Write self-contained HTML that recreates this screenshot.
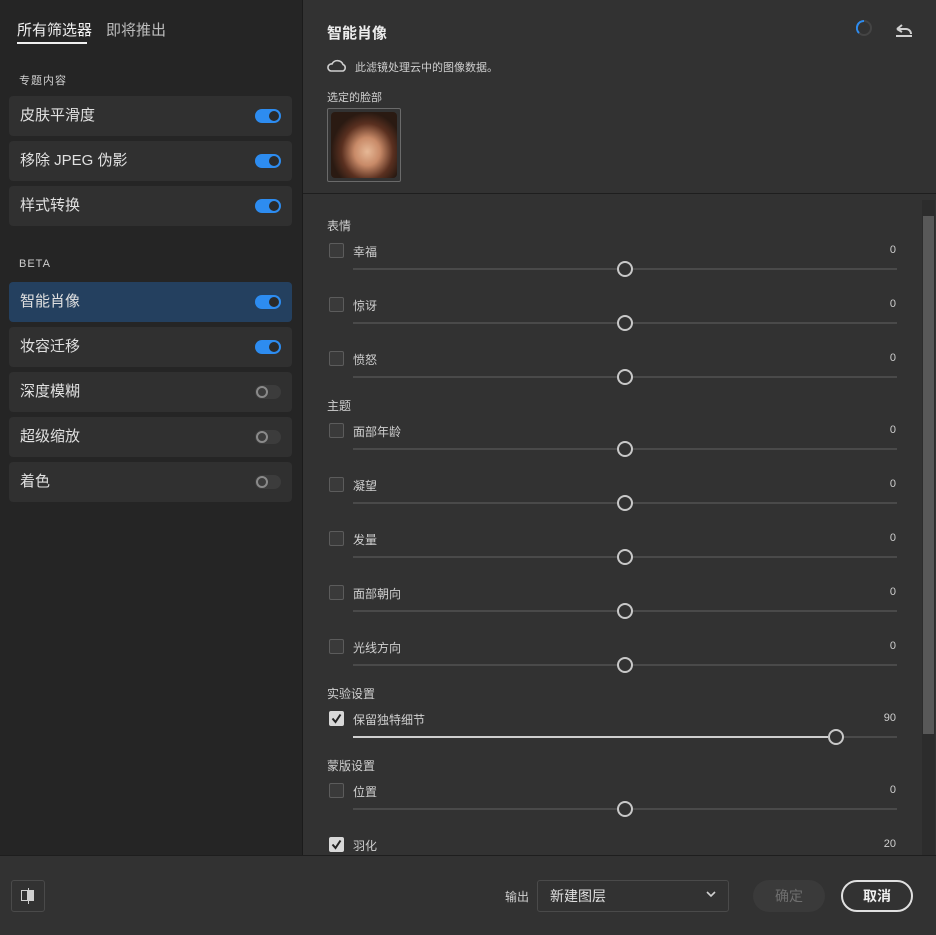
<!DOCTYPE html>
<html><head><meta charset="utf-8"><style>
*{margin:0;padding:0;box-sizing:border-box}
body{width:936px;height:935px;background:#323232;font-family:"Liberation Sans","Noto Sans CJK SC",sans-serif;position:relative;overflow:hidden;color:#d8d8d8}
.a{position:absolute}
#left{left:0;top:0;width:302px;height:855px;background:#252525}
#vdiv{left:302px;top:0;width:1px;height:855px;background:#1b1b1b}
.item{position:absolute;left:9px;width:283px;height:40px;background:#303030;border-radius:4px;font-size:15px;color:#e0e0e0;line-height:40px;padding-left:11px}
.item.sel{background:#24405f}
.tg{position:absolute;right:11px;top:13px;width:26px;height:14px;border-radius:7px;background:#2d8cf0}
.tg::after{content:"";position:absolute;right:2px;top:2px;width:10px;height:10px;border-radius:50%;background:#2a2a2a}
.tg.off{background:#3c3c3c}
.tg.off::after{left:1px;right:auto;top:1px;width:12px;height:12px;background:transparent;border:2px solid #8a8a8a;box-sizing:border-box}
.sec{position:absolute;left:19px;font-size:11px;color:#cfcfcf;letter-spacing:1px}
.lbl{position:absolute;left:353px;font-size:12px;color:#cfcfcf}
.val{position:absolute;right:40px;font-size:11px;color:#cfcfcf}
.cb{position:absolute;left:329px;width:15px;height:15px;border:1px solid #5c5c5c;background:#3a3a3a;border-radius:2px}
.cb.on{background:#d8d8d8;border-color:#d8d8d8}
.tr{position:absolute;left:353px;width:544px;height:2px;background:#4a4a4a}
.th{position:absolute;width:16px;height:16px;border-radius:50%;border:2px solid #c8c8c8;background:#323232}
.h{position:absolute;left:327px;font-size:12px;color:#cfcfcf}
</style></head><body>
<div id="left" class="a"></div>
<div id="vdiv" class="a"></div>
<div class="a" style="left:17px;top:19px;font-size:15px;color:#f0f0f0">所有筛选器</div>
<div class="a" style="left:17px;top:42px;width:70px;height:2px;background:#f0f0f0"></div>
<div class="a" style="left:106px;top:19px;font-size:15px;color:#bdbdbd">即将推出</div>
<div class="sec" style="top:72px">专题内容</div>
<div class="item" style="top:96px">皮肤平滑度<div class="tg"></div></div>
<div class="item" style="top:141px">移除 JPEG 伪影<div class="tg"></div></div>
<div class="item" style="top:186px">样式转换<div class="tg"></div></div>
<div class="sec" style="top:258px">BETA</div>
<div class="item sel" style="top:282px">智能肖像<div class="tg"></div></div>
<div class="item" style="top:327px">妆容迁移<div class="tg"></div></div>
<div class="item" style="top:372px">深度模糊<div class="tg off"></div></div>
<div class="item" style="top:417px">超级缩放<div class="tg off"></div></div>
<div class="item" style="top:462px">着色<div class="tg off"></div></div>

<div class="a" style="left:327px;top:22px;font-size:15px;font-weight:bold;color:#ececec">智能肖像</div>
<svg class="a" style="left:855px;top:19px" width="18" height="18"><circle cx="9" cy="9" r="7" fill="none" stroke="#444" stroke-width="2"/><path d="M9 2 A7 7 0 0 0 4 14" fill="none" stroke="#2d8cf0" stroke-width="2"/></svg>
<svg class="a" style="left:894px;top:22px" width="20" height="16"><path d="M3 7 L8 3 M3 7 L8 10 M3 7 H12 A5 5 0 0 1 17 12" fill="none" stroke="#d0d0d0" stroke-width="2"/><rect x="2" y="13" width="16" height="2" fill="#d0d0d0"/></svg>
<svg class="a" style="left:327px;top:57px" width="20" height="16"><path d="M4 14 H16 A3.5 3.5 0 0 0 16 7.5 A6 6 0 0 0 5 7 A3.5 3.5 0 0 0 4 14Z" fill="none" stroke="#cfcfcf" stroke-width="1.6"/></svg>
<div class="a" style="left:355px;top:59px;font-size:11px;color:#cfcfcf">此滤镜处理云中的图像数据。</div>
<div class="h" style="top:89px;font-size:11px">选定的脸部</div>
<div class="a" style="left:327px;top:108px;width:74px;height:74px;border:1px solid #6a6a6a;border-radius:2px"></div>
<div class="a" style="left:331px;top:112px;width:66px;height:66px;border-radius:4px;background:radial-gradient(ellipse at 55% 60%,#e6b896 0%,#c88a68 25%,#5a3020 50%,#2a1a12 70%),linear-gradient(90deg,#221510,#8a4a1a)"></div>
<div class="a" style="left:303px;top:193px;width:633px;height:1px;background:#1e1e1e"></div>
<div class="a" style="left:922px;top:200px;width:13px;height:655px;background:#2c2c2c"></div>
<div class="a" style="left:923px;top:216px;width:11px;height:518px;background:#585858"></div>

<div class="h" style="top:217px">表情</div>
<div class="cb" style="top:243px"></div><div class="lbl" style="top:243px">幸福</div><div class="val" style="top:244px">0</div><div class="tr" style="top:268px"></div><div class="th" style="left:617px;top:261px"></div>
<div class="cb" style="top:297px"></div><div class="lbl" style="top:297px">惊讶</div><div class="val" style="top:298px">0</div><div class="tr" style="top:322px"></div><div class="th" style="left:617px;top:315px"></div>
<div class="cb" style="top:351px"></div><div class="lbl" style="top:351px">愤怒</div><div class="val" style="top:352px">0</div><div class="tr" style="top:376px"></div><div class="th" style="left:617px;top:369px"></div>
<div class="h" style="top:397px">主题</div>
<div class="cb" style="top:423px"></div><div class="lbl" style="top:423px">面部年龄</div><div class="val" style="top:424px">0</div><div class="tr" style="top:448px"></div><div class="th" style="left:617px;top:441px"></div>
<div class="cb" style="top:477px"></div><div class="lbl" style="top:477px">凝望</div><div class="val" style="top:478px">0</div><div class="tr" style="top:502px"></div><div class="th" style="left:617px;top:495px"></div>
<div class="cb" style="top:531px"></div><div class="lbl" style="top:531px">发量</div><div class="val" style="top:532px">0</div><div class="tr" style="top:556px"></div><div class="th" style="left:617px;top:549px"></div>
<div class="cb" style="top:585px"></div><div class="lbl" style="top:585px">面部朝向</div><div class="val" style="top:586px">0</div><div class="tr" style="top:610px"></div><div class="th" style="left:617px;top:603px"></div>
<div class="cb" style="top:639px"></div><div class="lbl" style="top:639px">光线方向</div><div class="val" style="top:640px">0</div><div class="tr" style="top:664px"></div><div class="th" style="left:617px;top:657px"></div>
<div class="h" style="top:685px">实验设置</div>
<div class="cb on" style="top:711px"><svg width="13" height="13" style="position:absolute;left:0;top:0"><path d="M2.5 6.5 L5.5 10 L10.5 2.5" fill="none" stroke="#222" stroke-width="2"/></svg></div><div class="lbl" style="top:711px">保留独特细节</div><div class="val" style="top:712px">90</div><div class="tr" style="top:736px"></div><div class="tr" style="top:736px;width:475px;background:#cfcfcf"></div><div class="th" style="left:828px;top:729px"></div>
<div class="h" style="top:757px">蒙版设置</div>
<div class="cb" style="top:783px"></div><div class="lbl" style="top:783px">位置</div><div class="val" style="top:784px">0</div><div class="tr" style="top:808px"></div><div class="th" style="left:617px;top:801px"></div>
<div class="cb on" style="top:837px"><svg width="13" height="13" style="position:absolute;left:0;top:0"><path d="M2.5 6.5 L5.5 10 L10.5 2.5" fill="none" stroke="#222" stroke-width="2"/></svg></div><div class="lbl" style="top:837px">羽化</div><div class="val" style="top:838px">20</div>

<div class="a" style="left:0;top:855px;width:936px;height:80px;background:#323232;border-top:1px solid #1e1e1e"></div>
<div class="a" style="left:11px;top:880px;width:34px;height:32px;border:1px solid #4a4a4a;border-radius:3px"></div>
<svg class="a" style="left:20px;top:887px" width="18" height="18"><rect x="1.5" y="3.5" width="6" height="10" fill="none" stroke="#d0d0d0"/><rect x="8" y="3" width="6" height="11" fill="#d0d0d0"/><rect x="8" y="1" width="1" height="16" fill="#d0d0d0"/></svg>
<div class="a" style="left:505px;top:888px;font-size:12px;color:#cfcfcf">输出</div>
<div class="a" style="left:537px;top:880px;width:192px;height:32px;border:1px solid #4a4a4a;border-radius:3px;font-size:14px;color:#e0e0e0;line-height:30px;padding-left:12px">新建图层</div>
<svg class="a" style="left:705px;top:889px" width="12" height="10"><path d="M2 3 L6 7 L10 3" fill="none" stroke="#d0d0d0" stroke-width="1.6"/></svg>
<div class="a" style="left:753px;top:880px;width:72px;height:32px;border-radius:16px;background:#3a3a3a;color:#6e6e6e;font-size:14px;text-align:center;line-height:32px">确定</div>
<div class="a" style="left:841px;top:880px;width:72px;height:32px;border-radius:16px;border:2px solid #e0e0e0;color:#f0f0f0;font-size:14px;font-weight:bold;text-align:center;line-height:28px">取消</div>
</body></html>
